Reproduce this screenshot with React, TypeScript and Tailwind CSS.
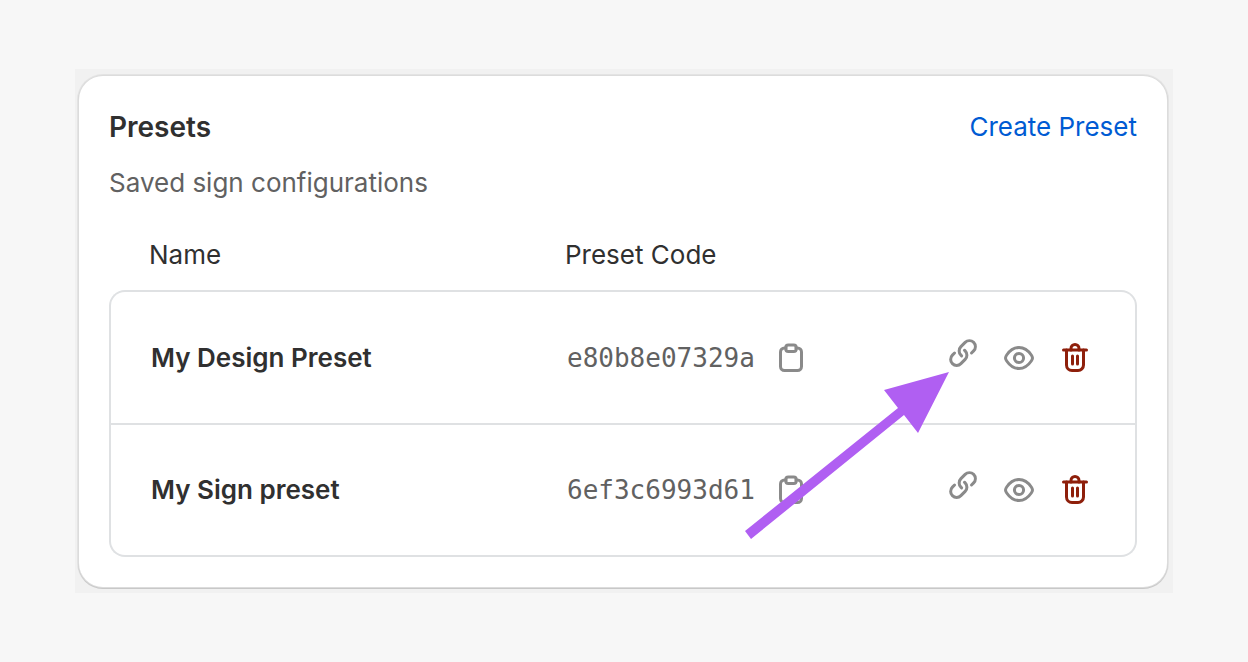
import type { ReactNode } from "react";

type Preset = {
  name: string;
  code: string;
};

const presets: Preset[] = [
  { name: "My Design Preset", code: "e80b8e07329a" },
  { name: "My Sign preset", code: "6ef3c6993d61" },
];

function Icon({ children }: { children: ReactNode }) {
  return (
    <svg
      viewBox="0 0 20 20"
      className="block size-10"
      fill="none"
      stroke="currentColor"
      strokeWidth="1.5"
      strokeLinecap="round"
      strokeLinejoin="round"
      aria-hidden="true"
    >
      {children}
    </svg>
  );
}

function ClipboardIcon() {
  return (
    <Icon>
      <path d="M7.5 5h-.75a2 2 0 0 0-2 2v7.25a2 2 0 0 0 2 2h6.5a2 2 0 0 0 2-2v-7.25a2 2 0 0 0-2-2h-.75" />
      <rect x="7.4" y="3.5" width="5.2" height="3.25" rx="1.25" />
    </Icon>
  );
}

function LinkIcon() {
  return (
    <Icon>
      <g fill="currentColor" stroke="none">
        <path d="M15.842 4.175a3.746 3.746 0 0 0-5.298 0l-2.116 2.117a3.75 3.75 0 0 0 .01 5.313l.338.336a.75.75 0 1 0 1.057-1.064l-.339-.337a2.25 2.25 0 0 1-.005-3.187l2.116-2.117a2.247 2.247 0 1 1 3.173 3.18l-1.052 1.047a.75.75 0 0 0 1.058 1.064l1.052-1.047a3.746 3.746 0 0 0 .006-5.305Z" />
        <path d="M4.178 15.845a3.75 3.75 0 0 0 5.304 0l2.121-2.122a3.75 3.75 0 0 0 0-5.303l-.362-.362a.75.75 0 0 0-1.06 1.06l.361.363a2.25 2.25 0 0 1 0 3.182l-2.122 2.122a2.25 2.25 0 1 1-3.182-3.182l1.07-1.07a.75.75 0 1 0-1.062-1.06l-1.069 1.069a3.75 3.75 0 0 0 0 5.303Z" />
      </g>
    </Icon>
  );
}

function EyeIcon() {
  return (
    <Icon>
      <path d="M3.25 10c0-.5.25-1 .6-1.5C5 6.8 7 4.75 10 4.75s5 2.05 6.15 3.75c.35.5.6 1 .6 1.5s-.25 1-.6 1.5c-1.15 1.7-3.15 3.75-6.15 3.75s-5-2.05-6.15-3.75c-.35-.5-.6-1-.6-1.5z" />
      <circle cx="10" cy="10" r="2.3" />
    </Icon>
  );
}

function TrashIcon() {
  return (
    <Icon>
      <path d="M4.25 6h11.5" />
      <path d="M8 6v-.75a2 2 0 0 1 4 0v.75" />
      <path d="M5.75 6v7.5a2.75 2.75 0 0 0 2.75 2.75h3a2.75 2.75 0 0 0 2.75-2.75v-7.5" />
      <path d="M8.75 9v4M11.25 9v4" />
    </Icon>
  );
}

export default function App() {
  return (
    <main className="min-h-screen bg-[#f7f7f7] px-[75px] py-[69px] font-[Inter,sans-serif] text-[26px] leading-10 text-[#303030]">
      <div className="relative bg-[#f1f1f1] pt-[7px] pr-[6px] pb-[6px] pl-1">
        <section className="rounded-3xl bg-white px-[30px] pt-[31px] pb-[30px] shadow-[0_0_0_1px_#dcdcdc,0_1px_0_1px_#c8c8c8,0_0_0_2px_#e3e3e3]">
          <header className="flex items-center justify-between">
            <h1 className="text-[28px] leading-10 font-semibold">Presets</h1>
            <button type="button" className="text-[#005bd3]">
              Create Preset
            </button>
          </header>
          <p className="mt-4 text-[#616161]">Saved sign configurations</p>

          <table className="mt-8 w-full table-fixed border-separate border-spacing-0 text-left">
            <thead>
              <tr>
                <th className="w-[416px] pb-[15px] pl-10 font-normal">Name</th>
                <th className="w-[280px] pb-[15px] pl-10 font-normal">Preset Code</th>
                <td />
              </tr>
            </thead>
            <tbody>
              {presets.map((preset) => (
                <tr key={preset.code} className="group">
                  <td className="h-[132px] border-b-2 border-l-2 border-[#dfe1e3] pl-10 font-semibold group-first:h-[135px] group-first:rounded-tl-2xl group-first:border-t-2 group-last:rounded-bl-2xl">
                    {preset.name}
                  </td>
                  <td className="border-b-2 border-[#dfe1e3] pl-[42px] group-first:border-t-2">
                    <div className="flex items-center gap-4 text-[#616161]">
                      <code className="font-['DejaVu_Sans_Mono',monospace]">{preset.code}</code>
                      <button type="button" aria-label="Copy preset code" className="text-[#8a8a8a]">
                        <ClipboardIcon />
                      </button>
                    </div>
                  </td>
                  <td className="border-r-2 border-b-2 border-[#dfe1e3] pr-10 group-first:rounded-tr-2xl group-first:border-t-2 group-last:rounded-br-2xl">
                    <div className="flex h-10 items-end justify-end gap-4 text-[#8a8a8a]">
                      <button type="button" aria-label="Copy link" className="pb-[5px]">
                        <LinkIcon />
                      </button>
                      <button type="button" aria-label="View preset">
                        <EyeIcon />
                      </button>
                      <button type="button" aria-label="Delete preset" className="text-[#8e1f0b]">
                        <TrashIcon />
                      </button>
                    </div>
                  </td>
                </tr>
              ))}
            </tbody>
          </table>
        </section>

        {/* pointer to the link button */}
        <svg
          viewBox="0 0 204 168"
          className="pointer-events-none absolute right-[224px] bottom-[53px] h-[168px] w-[204px] text-[#b05ff2]"
          fill="currentColor"
          aria-hidden="true"
        >
          <path d="M204 0 173 61 159 43 6 167 0 159 153 36 139 18Z" />
        </svg>
      </div>
    </main>
  );
}
